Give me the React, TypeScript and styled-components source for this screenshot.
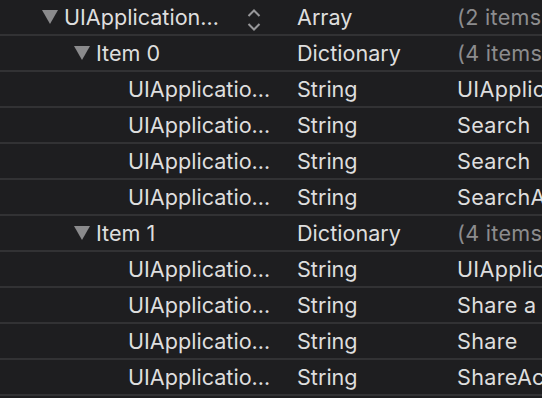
import React from 'react';
import styled, { createGlobalStyle } from 'styled-components';

const GlobalStyle = createGlobalStyle`
  html, body {
    margin: 0;
    padding: 0;
    background: #1e1e20;
    overflow: hidden;
  }
  body {
    font-family: Inter, "Noto Sans", sans-serif;
    -webkit-font-smoothing: antialiased;
  }
`;

type Row = {
  level: number;
  name: string;
  type: string;
  value: string;
  open?: boolean;
  muted?: boolean;
  stepper?: boolean;
};

const rows: Row[] = [
  { level: 0, name: 'UIApplication…', type: 'Array', value: '(2 items)', open: true, muted: true, stepper: true },
  { level: 1, name: 'Item 0', type: 'Dictionary', value: '(4 items)', open: true, muted: true },
  { level: 2, name: 'UIApplicatio…', type: 'String', value: 'UIApplicationShortcutIconTypeSearch' },
  { level: 2, name: 'UIApplicatio…', type: 'String', value: 'Search' },
  { level: 2, name: 'UIApplicatio…', type: 'String', value: 'Search' },
  { level: 2, name: 'UIApplicatio…', type: 'String', value: 'SearchAction' },
  { level: 1, name: 'Item 1', type: 'Dictionary', value: '(4 items)', open: true, muted: true },
  { level: 2, name: 'UIApplicatio…', type: 'String', value: 'UIApplicationShortcutIconTypeShare' },
  { level: 2, name: 'UIApplicatio…', type: 'String', value: 'Share a link' },
  { level: 2, name: 'UIApplicatio…', type: 'String', value: 'Share' },
  { level: 2, name: 'UIApplicatio…', type: 'String', value: 'ShareAction' },
];

const Table = styled.div`
  display: flex;
  flex-direction: column;
  width: 542px;
`;

const RowLine = styled.div`
  display: grid;
  grid-template-columns: 297px 160px 1fr;
  height: 34px;
  border-bottom: 2px solid #323234;
  align-items: center;
  font-size: 21.6px;
  line-height: 32px;
  color: #dedede;
  white-space: nowrap;
`;

const KeyCell = styled.div<{ $level: number }>`
  display: flex;
  align-items: center;
  height: 100%;
  padding-left: ${(p) => 42 + p.$level * 32}px;
  padding-right: 18px;
  position: relative;
  overflow: hidden;
`;

const Disclosure = styled.span<{ $hidden?: boolean }>`
  width: 16px;
  height: 14px;
  margin-right: 6px;
  flex: none;
  visibility: ${(p) => (p.$hidden ? 'hidden' : 'visible')};
  background: #8a8a8c;
  clip-path: polygon(0 0, 100% 0, 50% 100%);
`;

const KeyText = styled.span`
  flex: 1;
  overflow: hidden;
`;

const Stepper = styled.svg`
  position: absolute;
  left: 246px;
  top: 7px;
`;

const TypeCell = styled.div`
  overflow: hidden;
`;

const ValueCell = styled.div<{ $muted?: boolean }>`
  overflow: hidden;
  letter-spacing: 0.3px;
  color: ${(p) => (p.$muted ? '#8c8c8e' : '#dedede')};
`;

export default function App() {
  return (
    <>
      <GlobalStyle />
      <Table>
        {rows.map((r, i) => (
          <RowLine key={i}>
            <KeyCell $level={r.level}>
              <Disclosure $hidden={!r.open} />
              <KeyText>{r.name}</KeyText>
              {r.stepper && (
                <Stepper width="16" height="26" viewBox="0 0 16 26">
                  <path d="M2.5 9 L8 3.5 L13.5 9" fill="none" stroke="#98989a" strokeWidth="2" />
                  <path d="M2.5 17 L8 22.5 L13.5 17" fill="none" stroke="#98989a" strokeWidth="2" />
                </Stepper>
              )}
            </KeyCell>
            <TypeCell>{r.type}</TypeCell>
            <ValueCell $muted={r.muted}>{r.value}</ValueCell>
          </RowLine>
        ))}
      </Table>
    </>
  );
}
